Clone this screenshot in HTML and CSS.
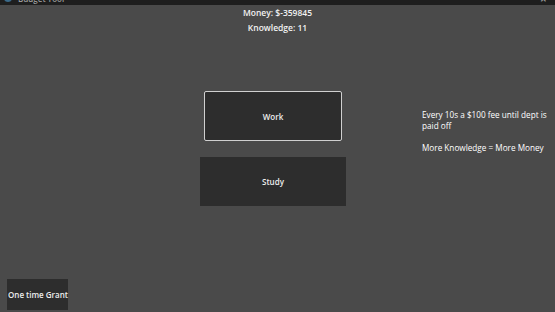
FILE: index.html
```html
<!DOCTYPE html>
<html lang="en">
<head>
  <meta charset="UTF-8">
  <meta name="viewport" content="width=device-width, initial-scale=1.0">
  <title>Budget Tool</title>
  <link rel="stylesheet" href="styles.css">
</head>
<body>
  <div class="titlebar">
    <div class="titlebar-inner">
      <span class="app-icon"></span>
      <span class="app-title">Budget Tool</span>
      <span class="win-controls">&#8212;&nbsp;&nbsp;&#10005;</span>
    </div>
  </div>

  <div class="stats">
    <p id="money">Money: $-359845</p>
    <p id="knowledge">Knowledge: 11</p>
  </div>

  <div class="main">
    <div class="actions">
      <button id="work" class="btn btn-work">Work</button>
      <button id="study" class="btn btn-study">Study</button>
    </div>
    <div class="info">
      <p>Every 10s a $100 fee until dept is paid off</p>
      <p>More Knowledge = More Money</p>
    </div>
  </div>

  <div class="footer">
    <button id="grant" class="btn btn-grant">One time Grant</button>
  </div>
</body>
</html>
```

FILE: styles.css
```css
body {
  font-family: 'Open Sans', 'Noto Sans', sans-serif;
  font-size: 8.5px;
  font-weight: 600;
  color: #f2f2f2;
  background-color: #4a4a4a;
  margin: 0;
  height: 312px;
  display: flex;
  flex-direction: column;
  overflow: hidden;
}

.titlebar {
  height: 5px;
  background-color: #1e1e1e;
  overflow: hidden;
  flex-shrink: 0;
}

.titlebar-inner {
  display: flex;
  align-items: center;
  height: 14px;
  margin-top: -9px;
  padding: 0 4px;
  color: #9a9a9a;
  font-size: 8px;
}

.app-icon {
  width: 8px;
  height: 8px;
  border-radius: 50%;
  background-color: #3a6a8a;
  margin-right: 6px;
}

.win-controls {
  margin-left: auto;
  margin-right: 4px;
}

.stats {
  text-align: center;
}

.stats p {
  margin: 0;
  line-height: 15px;
}

.main {
  display: flex;
  margin-top: 56px;
}

.actions {
  display: flex;
  flex-direction: column;
  align-items: center;
  width: 146px;
  margin-left: 200px;
}

.btn {
  font-family: inherit;
  font-size: 8px;
  font-weight: 600;
  color: #eeeeee;
  background-color: #2d2d2d;
  border: 1px solid #2d2d2d;
  cursor: pointer;
  padding: 0;
}

.btn-work {
  width: 138px;
  height: 50px;
  border-color: #d0d0d0;
  border-radius: 2px;
}

.btn-study {
  width: 146px;
  height: 49px;
  margin-top: 16px;
}

.info {
  margin-left: 76px;
  width: 126px;
  padding-top: 18px;
  font-size: 8.2px;
  font-weight: 400;
  color: #ffffff;
}

.info p {
  margin: 0 0 11px;
  line-height: 11px;
}

.footer {
  margin-top: auto;
  padding: 0 0 2px 7px;
}

.btn-grant {
  width: 61px;
  height: 31px;
  white-space: nowrap;
}
```
